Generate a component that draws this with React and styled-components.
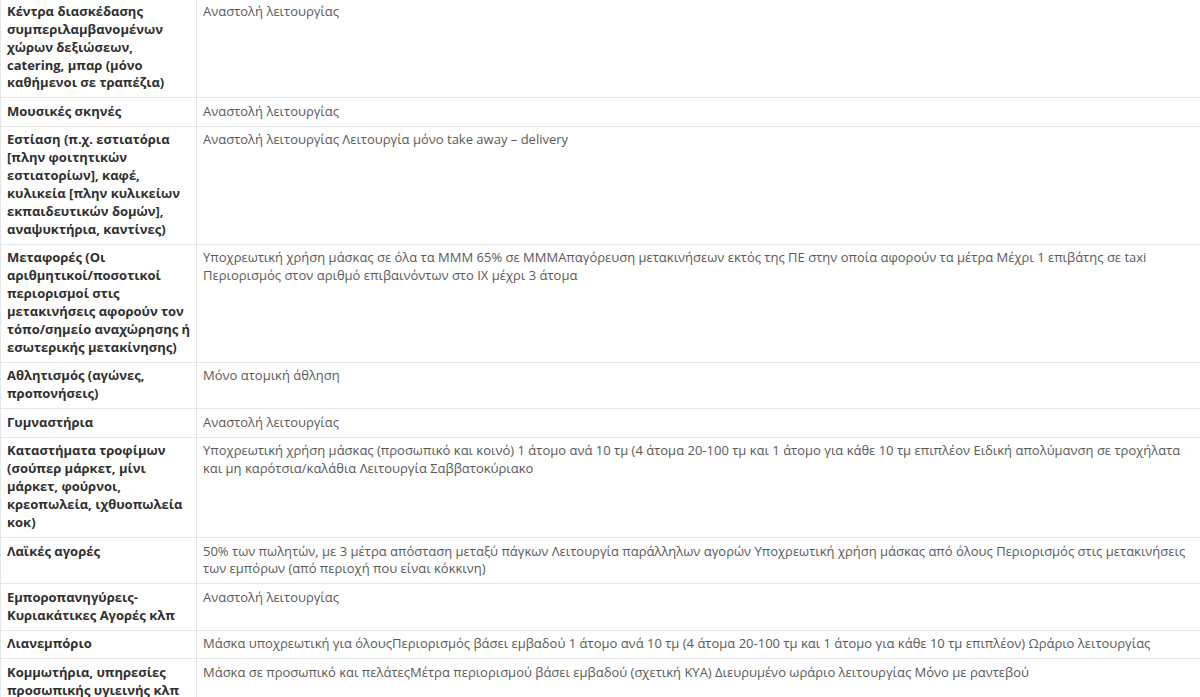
import { Fragment } from "react";
import styled, { createGlobalStyle } from "styled-components";

const GlobalStyle = createGlobalStyle`
  html, body {
    margin: 0;
    padding: 0;
    background: #ffffff;
    overflow: hidden;
  }
  body {
    font-family: "Open Sans", "Noto Sans", sans-serif;
  }
`;

// labels keep the reference's line breaks
const rows = [
  {
    label: ["Κέντρα διασκέδασης", "συμπεριλαμβανομένων", "χώρων δεξιώσεων,", "catering, μπαρ (μόνο", "καθήμενοι σε τραπέζια)"],
    text: "Αναστολή λειτουργίας",
  },
  { label: ["Μουσικές σκηνές"], text: "Αναστολή λειτουργίας" },
  {
    label: ["Εστίαση (π.χ. εστιατόρια", "[πλην φοιτητικών", "εστιατορίων], καφέ,", "κυλικεία [πλην κυλικείων", "εκπαιδευτικών δομών],", "αναψυκτήρια, καντίνες)"],
    text: "Αναστολή λειτουργίας Λειτουργία μόνο take away – delivery",
  },
  {
    label: ["Μεταφορές (Οι", "αριθμητικοί/ποσοτικοί", "περιορισμοί στις", "μετακινήσεις αφορούν τον", "τόπο/σημείο αναχώρησης ή", "εσωτερικής μετακίνησης)"],
    text: "Υποχρεωτική χρήση μάσκας σε όλα τα ΜΜΜ 65% σε ΜΜΜΑπαγόρευση μετακινήσεων εκτός της ΠΕ στην οποία αφορούν τα μέτρα Μέχρι 1 επιβάτης σε taxi Περιορισμός στον αριθμό επιβαινόντων στο ΙΧ μέχρι 3 άτομα",
  },
  { label: ["Αθλητισμός (αγώνες,", "προπονήσεις)"], text: "Μόνο ατομική άθληση" },
  { label: ["Γυμναστήρια"], text: "Αναστολή λειτουργίας" },
  {
    label: ["Καταστήματα τροφίμων", "(σούπερ μάρκετ, μίνι", "μάρκετ, φούρνοι,", "κρεοπωλεία, ιχθυοπωλεία", "κοκ)"],
    text: "Υποχρεωτική χρήση μάσκας (προσωπικό και κοινό) 1 άτομο ανά 10 τμ (4 άτομα 20-100 τμ και 1 άτομο για κάθε 10 τμ επιπλέον Ειδική απολύμανση σε τροχήλατα και μη καρότσια/καλάθια Λειτουργία Σαββατοκύριακο",
  },
  {
    label: ["Λαϊκές αγορές"],
    text: "50% των πωλητών, με 3 μέτρα απόσταση μεταξύ πάγκων Λειτουργία παράλληλων αγορών Υποχρεωτική χρήση μάσκας από όλους Περιορισμός στις μετακινήσεις των εμπόρων (από περιοχή που είναι κόκκινη)",
  },
  { label: ["Εμποροπανηγύρεις-", "Κυριακάτικες Αγορές κλπ"], text: "Αναστολή λειτουργίας" },
  {
    label: ["Λιανεμπόριο"],
    text: "Μάσκα υποχρεωτική για όλουςΠεριορισμός βάσει εμβαδού 1 άτομο ανά 10 τμ (4 άτομα 20-100 τμ και 1 άτομο για κάθε 10 τμ επιπλέον) Ωράριο λειτουργίας",
  },
  {
    label: ["Κομμωτήρια, υπηρεσίες", "προσωπικής υγιεινής κλπ"],
    text: "Μάσκα σε προσωπικό και πελάτεςΜέτρα περιορισμού βάσει εμβαδού (σχετική ΚΥΑ) Διευρυμένο ωράριο λειτουργίας Μόνο με ραντεβού",
  },
];

const Table = styled.div`
  display: grid;
  grid-template-columns: 196px 1fr;
  width: 1201px;
  margin-top: -2px;
  border-left: 1px solid #e6e6e6;
`;

const Cell = styled.div`
  padding: 4.8px 6px;
  font-size: 13px;
  line-height: 17.9px;
  border-bottom: 1px solid #e6e6e6;
  border-right: 1px solid #e6e6e6;
  color: #5a5a5a;
`;

const HeadCell = styled(Cell)`
  padding-right: 2px;
  color: #2f2f2f;
  font-weight: 700;
  white-space: nowrap;
`;

const Line = styled.span`
  display: block;
`;

export default function App() {
  return (
    <>
      <GlobalStyle />
      <Table>
        {rows.map((r, i) => (
          <Fragment key={i}>
            <HeadCell>
              {r.label.map((l) => (
                <Line key={l}>{l}</Line>
              ))}
            </HeadCell>
            <Cell>{r.text}</Cell>
          </Fragment>
        ))}
      </Table>
    </>
  );
}
